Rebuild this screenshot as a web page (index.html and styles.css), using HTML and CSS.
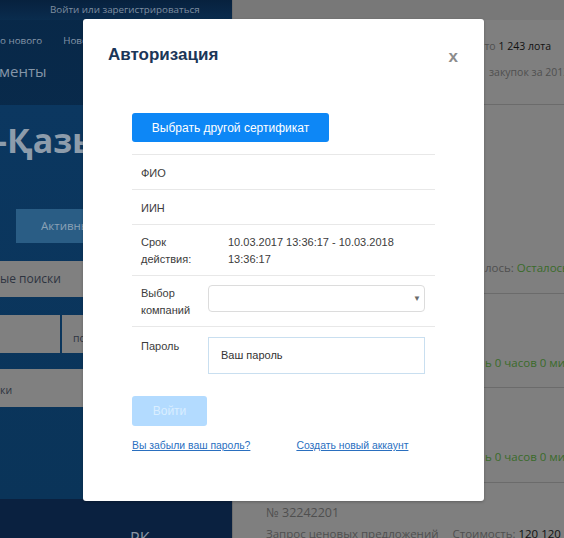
FILE: index.html
```html
<!DOCTYPE html>
<html lang="ru">
<head>
<meta charset="utf-8">
<title>Авторизация</title>
<link rel="stylesheet" href="styles.css">
</head>
<body>
<div class="page">
  <aside class="side">
    <div class="side-top">Войти или зарегистрироваться</div>
    <nav class="side-nav"><span>о нового</span><span>Новости</span></nav>
    <div class="side-sub">менты</div>
    <div class="side-hero">
      <div class="hero-title">-Қазына</div>
      <div class="tab-btn">Активные</div>
      <div class="grey-bar">ые поиски</div>
      <div class="grey-pair"><div class="gp-a"></div><div class="gp-b">по</div></div>
      <div class="grey-bar grey-bar-2">ки</div>
    </div>
    <div class="side-foot"><span class="foot-text">РК</span></div>
  </aside>
  <main class="main">
    <div class="main-top"></div>
    <div class="stat stat-1"><span class="muted">нто </span><span class="dark">1 243 лота</span></div>
    <div class="stat stat-2"><span class="muted">закупок за 2013</span></div>
    <div class="lot lot-1"><span class="muted">лось: </span><span class="green">Осталось</span></div>
    <div class="lot lot-2"><span class="green">ь 0 часов 0 минут</span></div>
    <div class="lot lot-3"><span class="green">ь 0 часов 0 минут</span></div>
    <div class="lot-last">
      <div class="lot-no">№ 32242201</div>
      <div class="lot-row"><span>Запрос ценовых предложений</span><span>Стоимость: <b>120 120</b></span></div>
    </div>
  </main>
</div>

<div class="modal">
  <div class="modal-head">
    <h2 class="modal-title">Авторизация</h2>
    <span class="modal-close">x</span>
  </div>
  <div class="modal-body">
    <button class="btn-cert">Выбрать другой сертификат</button>
    <div class="rows">
      <div class="row row-s"><div class="lbl">ФИО</div></div>
      <div class="row row-s"><div class="lbl">ИИН</div></div>
      <div class="row row-l"><div class="lbl">Срок<br>действия:</div><div class="val">10.03.2017 13:36:17 - 10.03.2018<br>13:36:17</div></div>
      <div class="row row-l"><div class="lbl">Выбор<br>компаний</div><div class="select"><span class="caret">▼</span></div></div>
      <div class="row row-p"><div class="lbl">Пароль</div><div class="input">Ваш пароль</div></div>
    </div>
    <button class="btn-login">Войти</button>
    <div class="links"><a href="#" class="link">Вы забыли ваш пароль?</a><a href="#" class="link">Создать новый аккаунт</a></div>
  </div>
</div>
</body>
</html>
```

FILE: styles.css
```css
html, body {
  margin: 0;
  padding: 0;
}
body {
  width: 564px;
  height: 538px;
  overflow: hidden;
  position: relative;
  font-family: "Open Sans", "Noto Sans", sans-serif;
  background: #7f7f7f;
}
.page {
  display: flex;
  height: 538px;
}
.side {
  width: 232px;
  flex: none;
  display: flex;
  flex-direction: column;
  background: linear-gradient(180deg, #082848 0%, #0a3156 100%);
  overflow: hidden;
  white-space: nowrap;
}
.side-top {
  height: 20px;
  line-height: 20px;
  font-size: 9.8px;
  color: #7f8ea0;
  padding-left: 50px;
  background: linear-gradient(180deg, #07213e, #0a2c4e);
}
.side-nav {
  height: 41px;
  display: flex;
  align-items: center;
  gap: 21px;
  font-size: 9.8px;
  color: #8696a8;
}
.side-sub {
  height: 44px;
  line-height: 20px;
  font-size: 15px;
  color: #8696a8;
  margin-left: -1px;
}
.side-hero {
  flex: 1;
  background: linear-gradient(180deg, #0b3760 0%, #0a3459 100%);
  display: flex;
  flex-direction: column;
}
.hero-title {
  font-size: 34px;
  font-weight: 700;
  color: #8d9cab;
  line-height: 44px;
  margin-top: 13px;
  margin-left: -4px;
}
.tab-btn {
  margin: 47px 0 0 16px;
  height: 34px;
  line-height: 34px;
  background: #2a5d85;
  color: #8aa2b6;
  font-size: 11.5px;
  padding-left: 25px;
}
.grey-bar {
  margin-top: 18px;
  height: 36px;
  line-height: 36px;
  background: #808080;
  color: #2e3440;
  font-size: 12px;
}
.grey-pair {
  margin-top: 18px;
  height: 38px;
  display: flex;
  gap: 2px;
}
.gp-a {
  width: 60px;
  background: #808080;
}
.gp-b {
  flex: 1;
  background: #808080;
  color: #2e3440;
  font-size: 10.5px;
  padding: 16px 0 0 11px;
}
.grey-bar-2 {
  margin-top: 16px;
  height: 38px;
  line-height: 42px;
  font-size: 10.5px;
}
.side-foot {
  height: 39px;
  flex: none;
  background: #0a2140;
}
.foot-text {
  display: block;
  color: #8a95a3;
  font-size: 16px;
  padding: 28px 0 0 130px;
}
.main {
  flex: 1;
  display: flex;
  flex-direction: column;
  border-left: 1px solid #6e6e6e;
  white-space: nowrap;
  overflow: hidden;
  font-size: 10.5px;
}
.main > * {
  flex: none;
}
.main-top {
  height: 20px;
  background: #787878;
}
.muted { color: #4f4f4f; }
.dark { color: #111; }
.green { color: #3a6b2a; }
.stat {
  height: 26px;
  line-height: 26px;
}
.stat-1 {
  margin-top: 13px;
  text-align: right;
  padding-right: 13px;
}
.stat-2 { padding-left: 256px; }
.lot {
  border-top: 1px solid #6b6b6b;
  padding-left: 252px;
  font-size: 11.5px;
}
.lot-1 {
  margin-top: 19px;
  height: 189px;
  line-height: 20px;
  padding-top: 153px;
  box-sizing: border-box;
}
.lot-2, .lot-3 {
  height: 94px;
  padding-top: 59px;
  box-sizing: border-box;
  line-height: 20px;
}
.lot-3 { height: 95px; }
.lot-last {
  border-top: 1px solid #6b6b6b;
  padding-left: 33px;
  color: #4f4f4f;
}
.lot-no {
  font-size: 12.5px;
  margin-top: 20px;
  line-height: 20px;
}
.lot-row {
  display: flex;
  gap: 14px;
  font-size: 11.5px;
  margin-top: 3px;
}
.lot-row b { font-weight: 400; color: #111; }

/* modal */
.modal {
  position: absolute;
  left: 83px;
  top: 19px;
  width: 401px;
  height: 482px;
  background: #fff;
  border-radius: 3px;
  box-shadow: 0 1px 3px rgba(0,0,0,0.25);
  box-sizing: border-box;
  font-family: "Liberation Sans", Arial, sans-serif;
}
.modal-head {
  display: flex;
  justify-content: space-between;
  align-items: center;
  padding: 24px 26px 0 25px;
  height: 24px;
}
.modal-title {
  margin: 0;
  font-size: 17px;
  font-weight: 700;
  color: #1b3658;
  line-height: 24px;
}
.modal-close {
  font-size: 17px;
  font-weight: 700;
  color: #8c8c8c;
  line-height: 24px;
  margin-top: 4px;
}
.modal-body {
  padding: 46px 49px 0 49px;
  display: flex;
  flex-direction: column;
  align-items: flex-start;
}
.btn-cert {
  height: 29px;
  width: 197px;
  border: 0;
  border-radius: 3px;
  background: #0d87f6;
  color: #fff;
  font-family: "Liberation Sans", Arial, sans-serif;
  font-size: 12px;
  padding: 0;
}
.rows {
  margin-top: 12px;
  width: 303px;
  font-size: 11px;
  color: #3c3c3c;
}
.row {
  display: flex;
  border-top: 1px solid #e8e8e8;
  box-sizing: border-box;
}
.row-s {
  height: 35px;
  align-items: center;
  padding-left: 9px;
}
.row-s .lbl { padding-top: 1px; }
.row-l {
  height: 51px;
  padding-left: 9px;
  line-height: 17px;
  align-items: flex-start;
}
.row-l .lbl {
  width: 67px;
  flex: none;
  padding-top: 9px;
}
.row-l .val {
  padding-top: 9px;
  padding-left: 20px;
  font-size: 11px;
}
.select {
  margin-top: 9px;
  width: 217px;
  height: 27px;
  border: 1px solid #dcdcdc;
  border-radius: 4px;
  box-sizing: border-box;
  display: flex;
  justify-content: flex-end;
  align-items: center;
  padding-right: 3px;
}
.caret {
  font-size: 8px;
  color: #6a6a6a;
}
.row-p {
  padding-left: 9px;
  padding-top: 10px;
  height: 49px;
}
.row-p .lbl {
  width: 67px;
  flex: none;
  padding-top: 3px;
}
.input {
  width: 217px;
  height: 37px;
  border: 1px solid #c9dff0;
  box-sizing: border-box;
  padding-left: 12px;
  line-height: 35px;
  color: #333;
}
.btn-login {
  margin-top: 21px;
  width: 75px;
  height: 30px;
  border: 0;
  border-radius: 3px;
  background: #b3dbff;
  color: #d9eeff;
  font-family: "Liberation Sans", Arial, sans-serif;
  font-size: 12px;
  padding: 0;
}
.links {
  margin-top: 14px;
  display: flex;
  gap: 46px;
  font-size: 10.4px;
}
.link {
  color: #2a6fbf;
  text-decoration: underline;
}
```
